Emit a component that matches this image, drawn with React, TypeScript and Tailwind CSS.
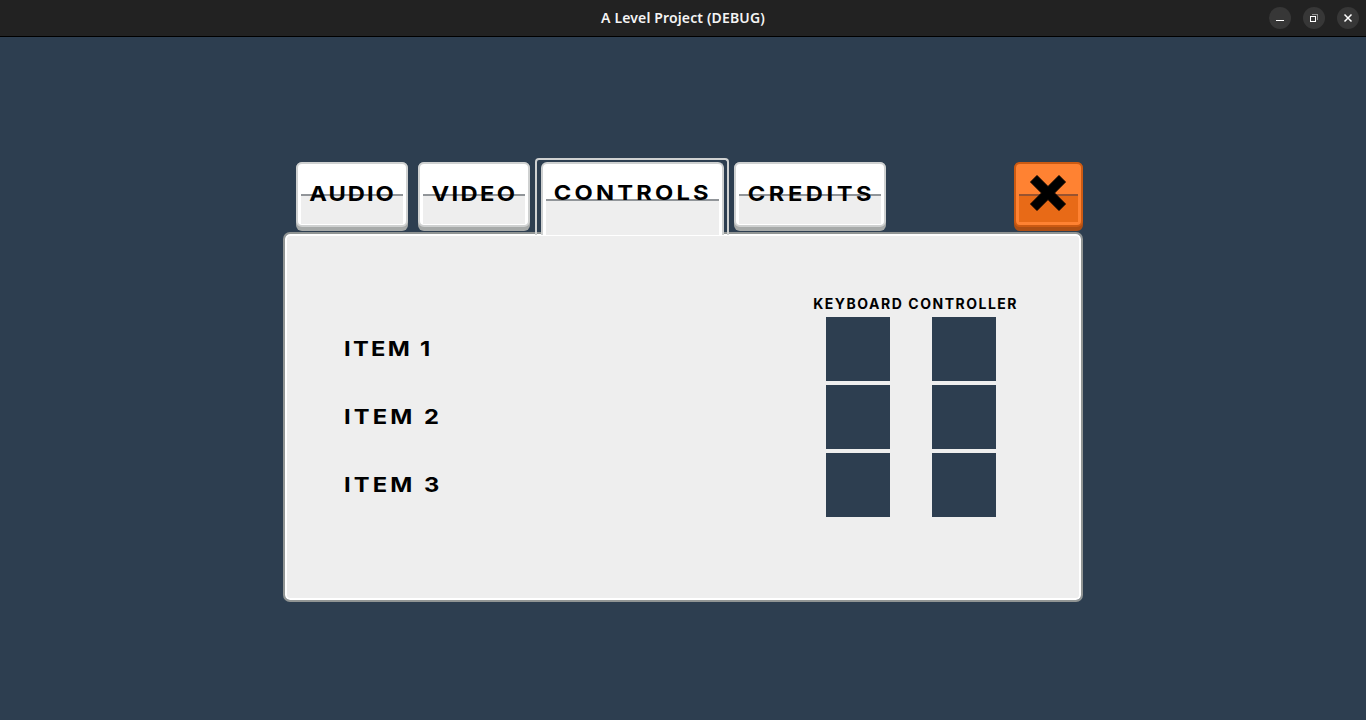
import type { ReactNode } from 'react';

type TabProps = { children: ReactNode; width: string; spacing: string };

function Tab({ children, width, spacing }: TabProps) {
  return (
    <button className={`${width} mt-1 h-[69px] rounded-[6px] bg-[#a7aaa9] pb-1`}>
      <span className="grid h-[65px] rounded-[6px] border-2 border-[#cfd1d1] bg-white px-[3px] pb-[3px]">
        <span className="col-start-1 row-start-1 mt-[30px] border-t-2 border-[#919599] bg-[#eeeeee]" />
        <span className="col-start-1 row-start-1 flex h-[60px] items-center justify-center text-[20.6px] leading-none font-bold">
          <span className={`${spacing} inline-block scale-x-[1.15]`}>{children}</span>
        </span>
      </span>
    </button>
  );
}

function ActiveTab() {
  return (
    <div className="relative z-10 h-[77px] w-[194px] rounded-t-[4px] border-2 border-b-0 border-[#cfd1d1] px-1 pt-[2px]">
      <button className="grid h-[73px] w-[183px] rounded-t-[6px] border-2 border-b-0 border-[#cfd1d1] bg-white px-[3px]">
        <span className="col-start-1 row-start-1 mt-[35px] border-t-2 border-[#919599] bg-[#eeeeee]" />
        <span className="col-start-1 row-start-1 flex h-[58px] items-center justify-center text-[20.6px] leading-none font-bold">
          <span className="-mr-[1px] inline-block scale-x-[1.15] tracking-[2.8px]">CONTROLS</span>
        </span>
      </button>
    </div>
  );
}

function CloseTab() {
  return (
    <button aria-label="Close" className="mt-1 ml-auto h-[69px] w-[69px] rounded-[6px] bg-[#ad4e13] pb-1">
      <span className="grid h-[65px] rounded-[6px] border-2 border-[#cc5a12] bg-[#ff8232] px-[3px] pb-[3px]">
        <span className="col-start-1 row-start-1 mt-[30px] border-t-2 border-[#985330] bg-[#e86a17]" />
        <svg viewBox="0 0 38 38" className="col-start-1 row-start-1 mt-[10px] mr-[1px] h-[38px] w-[38px] justify-self-center">
          <path
            d="M8 1.5 19 12.5 30 1.5 36.5 8 25.5 19 36.5 30 30 36.5 19 25.5 8 36.5 1.5 30 12.5 19 1.5 8Z"
            fill="#000"
            stroke="#000"
            strokeWidth="1"
            strokeLinejoin="round"
          />
        </svg>
      </span>
    </button>
  );
}

function Item({ children, spacing }: { children: ReactNode; spacing: string }) {
  return (
    <li className="flex h-[68px] items-center text-[20.6px] leading-none font-bold">
      <span className={`${spacing} inline-block origin-left scale-x-[1.15]`}>{children}</span>
    </li>
  );
}

function BindingColumn({ title, offset }: { title: string; offset: string }) {
  return (
    <div className="flex flex-col items-center">
      <h2 className="flex h-[18px] items-center text-[14px] leading-none font-bold tracking-[1.5px] whitespace-nowrap">{title}</h2>
      <div className={`${offset} mt-[4px] flex flex-col gap-1`}>
        {[1, 2, 3].map((n) => (
          <div key={n} className="h-16 w-16 bg-[#2d3e50]" />
        ))}
      </div>
    </div>
  );
}

export default function App() {
  return (
    <div className="h-[720px] w-[1366px] overflow-hidden bg-[#2d3e50] font-['Inter',sans-serif] text-black">
      <header className="grid h-[37px] grid-cols-[1fr_auto_1fr] items-center border-b border-black bg-[#222222]">
        <h1 className="col-start-2 pb-[2px] font-['Noto_Sans',sans-serif] text-[14px] font-semibold tracking-[0.14px] text-[#f4f4f4]">
          A Level Project (DEBUG)
        </h1>
        <div className="flex justify-end gap-3 pr-[7px]">
          <button aria-label="Minimise" className="h-[22px] w-[22px] rounded-full bg-[#373737]">
            <svg viewBox="0 0 22 22" className="h-[22px] w-[22px]" shapeRendering="crispEdges">
              <path d="M7 13h8v1H7z" fill="#fff" />
            </svg>
          </button>
          <button aria-label="Restore" className="h-[22px] w-[22px] rounded-full bg-[#373737]">
            <svg viewBox="0 0 22 22" className="h-[22px] w-[22px]" fill="none" shapeRendering="crispEdges">
              <path d="M9 7.5h5.5V13" stroke="#929292" />
              <path d="M7.5 9.5h5v5h-5z" stroke="#fff" />
            </svg>
          </button>
          <button aria-label="Close window" className="h-[22px] w-[22px] rounded-full bg-[#373737]">
            <svg viewBox="0 0 22 22" className="h-[22px] w-[22px]">
              <path d="m7.5 7.5 7 7m0-7-7 7" stroke="#fff" strokeWidth="1.5" />
            </svg>
          </button>
        </div>
      </header>
      <main className="mx-auto w-[800px] pt-[121px]">
        <nav className="flex h-[74px] items-start pl-[13px]">
          <Tab width="w-[112px]" spacing="-mr-[1px] tracking-[1.7px]">AUDIO</Tab>
          <div className="w-[10px]" />
          <Tab width="w-[112px]" spacing="-mr-[1px] tracking-[2.1px]">VIDEO</Tab>
          <div className="w-[5px]" />
          <ActiveTab />
          <div className="w-[5px]" />
          <Tab width="w-[152px]" spacing="-mr-[2px] tracking-[3.1px]">CREDITS</Tab>
          <CloseTab />
        </nav>
        <section className="h-[370px] rounded-[7px] border-2 border-[#919594]">
          <div className="flex h-full justify-between rounded-[5px] border-2 border-white bg-[#eeeeee] pr-[61px] pl-[57px]">
            <ul className="mt-[79px]">
              <Item spacing="tracking-[2px]">ITEM 1</Item>
              <Item spacing="tracking-[2.7px]">ITEM 2</Item>
              <Item spacing="tracking-[2.7px]">ITEM 3</Item>
            </ul>
            <div className="mt-[59px] flex gap-[5px]">
              <BindingColumn title="KEYBOARD" offset="" />
              <BindingColumn title="CONTROLLER" offset="ml-[2px]" />
            </div>
          </div>
        </section>
      </main>
    </div>
  );
}
